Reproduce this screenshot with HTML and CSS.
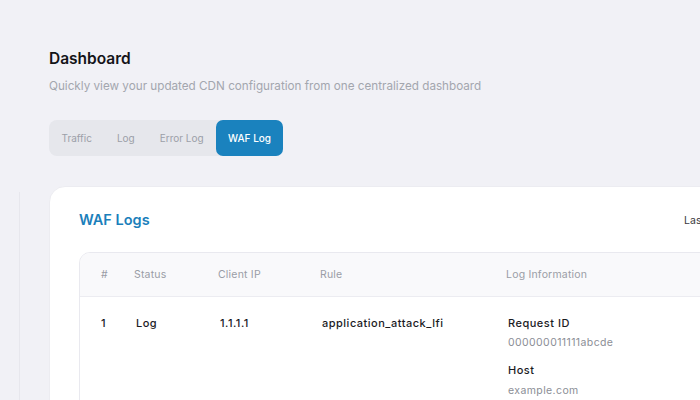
FILE: index.html
```html
<!DOCTYPE html>
<html lang="en">
<head>
<meta charset="utf-8">
<title>Dashboard</title>
<link rel="stylesheet" href="styles.css">
</head>
<body>
<div class="layout">
  <aside class="sidebar"></aside>
  <main class="main">
    <h1 class="page-title">Dashboard</h1>
    <p class="page-sub">Quickly view your updated CDN configuration from one centralized dashboard</p>
    <nav class="tabs">
      <span class="tab">Traffic</span>
      <span class="tab">Log</span>
      <span class="tab">Error Log</span>
      <span class="tab active">WAF Log</span>
    </nav>
    <section class="card">
      <div class="card-head">
        <h2 class="card-title">WAF Logs</h2>
        <span class="card-range">Last 24 hours</span>
      </div>
      <div class="table">
        <div class="row head">
          <span>#</span>
          <span>Status</span>
          <span>Client IP</span>
          <span>Rule</span>
          <span>Log Information</span>
        </div>
        <div class="row body">
          <span>1</span>
          <span>Log</span>
          <span>1.1.1.1</span>
          <span>application_attack_lfi</span>
          <div class="info">
            <div class="info-label">Request ID</div>
            <div class="info-value">000000011111abcde</div>
            <div class="info-label">Host</div>
            <div class="info-value">example.com</div>
          </div>
        </div>
      </div>
    </section>
  </main>
</div>
</body>
</html>
```

FILE: styles.css
```css
* { box-sizing: border-box; }
html, body {
  margin: 0;
  padding: 0;
  height: 100%;
  overflow: hidden;
}
body {
  background: #f1f1f6;
  font-family: "Inter", "Open Sans", "Liberation Sans", sans-serif;
  color: #1b1b1f;
}
.layout {
  display: flex;
  min-height: 100%;
}
.sidebar {
  flex: 0 0 20px;
  margin-top: 192px;
  border-right: 1px solid #e7e7ed;
}
.main {
  flex: 0 0 auto;
  padding: 49px 0 0 29px;
}
.page-title {
  margin: 0;
  font-size: 15.5px;
  line-height: 20px;
  font-weight: 600;
  color: #141418;
}
.page-sub {
  margin: 9px 0 0;
  font-size: 11.7px;
  line-height: 16px;
  color: #a3a6ae;
}
.tabs {
  display: inline-flex;
  margin-top: 26px;
  height: 36px;
  background: #e6e7ec;
  border-radius: 8px;
}
.tab {
  display: flex;
  align-items: center;
  padding: 0 12.5px;
  font-size: 10px;
  color: #9c9fa8;
}
.tab.active {
  padding: 0 12px;
  background: #1a82be;
  color: #ffffff;
  border-radius: 7px;
  font-weight: 500;
}
.card {
  margin-top: 30px;
  width: 740px;
  background: #ffffff;
  border-radius: 16px;
  border: 1px solid #ececf1;
  padding: 23px 30px 30px 29px;
}
.card-head {
  display: flex;
  justify-content: space-between;
  align-items: center;
}
.card-title {
  margin: 0;
  font-size: 14.5px;
  line-height: 20px;
  font-weight: 600;
  color: #1b7fbb;
}
.card-range {
  margin-right: 6px;
  font-size: 10.5px;
  color: #3a3a40;
}
.table {
  margin-top: 22px;
  border: 1px solid #e9e9ef;
  border-radius: 11px;
  overflow: hidden;
  width: 680px;
}
.row {
  display: grid;
  grid-template-columns: 33px 84px 102px 186px 1fr;
  padding-left: 21px;
  font-size: 10.5px;
}
.row.head {
  height: 44px;
  align-items: center;
  background: #f9f9fb;
  border-bottom: 1px solid #ececf1;
  color: #9a9da6;
  letter-spacing: 0.2px;
}
.row.body {
  padding-top: 18px;
  padding-bottom: 20px;
  line-height: 16px;
  font-size: 11px;
  letter-spacing: 0.5px;
  font-weight: 500;
  color: #1b1b1f;
}
.row.body > span:nth-child(n+2) { padding-left: 2px; }
.info { padding-left: 2px; }
.info-label {
  font-weight: 500;
  color: #1b1b1f;
}
.info-value {
  margin-top: 4px;
  margin-bottom: 11px;
  font-size: 10.5px;
  letter-spacing: 0.4px;
  font-weight: 400;
  color: #8b8e96;
}
.info-label + .info-value + .info-label + .info-value { margin-top: 5px; }
```
